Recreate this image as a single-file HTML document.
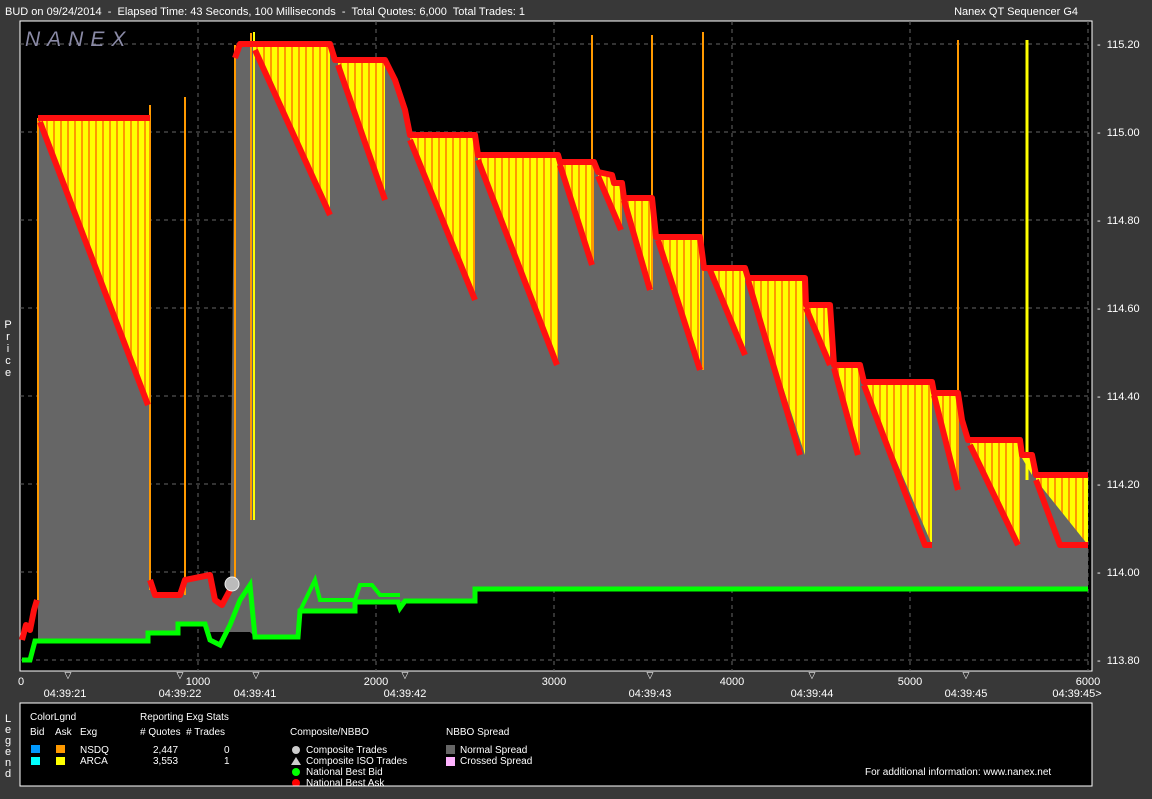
<!DOCTYPE html>
<html><head><meta charset="utf-8"><style>
html,body{margin:0;padding:0;background:#383838;width:1152px;height:799px;overflow:hidden}
svg{display:block}
text{font-family:"Liberation Sans",Arial,sans-serif;fill:#fff;font-size:11px;white-space:pre}
</style></head><body>
<svg width="1152" height="799" viewBox="0 0 1152 799" xmlns="http://www.w3.org/2000/svg" xml:space="preserve">
<defs>
<pattern id="st" width="7" height="10" patternUnits="userSpaceOnUse">
<rect width="7" height="10" fill="#ffff00"/><rect x="4" width="2" height="10" fill="#ff9900"/>
</pattern>
</defs>
<rect width="1152" height="799" fill="#383838"/>
<text x="5" y="15">BUD on 09/24/2014  -  Elapsed Time: 43 Seconds, 100 Milliseconds  -  Total Quotes: 6,000  Total Trades: 1</text>
<text x="1078" y="15" text-anchor="end">Nanex QT Sequencer G4</text>
<rect x="20" y="21" width="1072" height="650" fill="#000" stroke="#fff" stroke-width="1"/>
<g stroke="#666" stroke-dasharray="4,4" stroke-width="1">
<line x1="20" x2="1092" y1="44" y2="44"/><line x1="20" x2="1092" y1="132" y2="132"/>
<line x1="20" x2="1092" y1="220" y2="220"/><line x1="20" x2="1092" y1="308" y2="308"/>
<line x1="20" x2="1092" y1="396" y2="396"/><line x1="20" x2="1092" y1="484" y2="484"/>
<line x1="20" x2="1092" y1="572" y2="572"/><line x1="20" x2="1092" y1="660" y2="660"/>
<line y1="21" y2="671" x1="198" x2="198"/><line y1="21" y2="671" x1="376" x2="376"/>
<line y1="21" y2="671" x1="554" x2="554"/><line y1="21" y2="671" x1="732" x2="732"/>
<line y1="21" y2="671" x1="910" x2="910"/><line y1="21" y2="671" x1="1088" x2="1088"/>
</g>
<text x="25" y="46" style="font-size:21px;font-style:italic;letter-spacing:7px;fill:#8a8aa6">NANEX</text>
<polygon fill="#666" points="38,118 150,118 150,585 155,595 180,595 185,580 210,575 215,600 222,605 230,590 235,58 240,44 330,44 335,60 385,60 395,80 405,110 410,135 475,135 478,155 558,155 560,162 594,162 598,172 612,175 614,183 622,183 624,198 652,198 656,237 700,237 704,268 745,268 748,278 805,278 806,305 830,305 834,365 860,365 864,382 932,382 934,393 958,393 962,420 968,440 1020,440 1022,455 1032,455 1036,475 1088,475 1088,589 475,589 475,602 355,602 355,611 300,611 298,637 255,637 250,632 205,632 205,624 178,624 178,633 148,633 148,641 38,641"/>
<g fill="url(#st)">
<polygon points="40,118 150,118 150,405 40,122"/>
<polygon points="255,44 330,44 330,215 255,50"/>
<polygon points="338,60 385,60 385,200 338,65"/>
<polygon points="410,135 475,135 475,300 410,140"/>
<polygon points="478,155 558,155 558,365 478,160"/>
<polygon points="560,162 594,162 594,265 560,165"/>
<polygon points="598,172 622,183 622,230 598,176"/>
<polygon points="624,198 652,198 652,290 624,200"/>
<polygon points="658,237 700,237 700,370 658,240"/>
<polygon points="710,268 745,268 745,355 710,270"/>
<polygon points="748,278 805,278 805,455 748,280"/>
<polygon points="806,305 830,305 830,365 806,308"/>
<polygon points="834,365 860,365 860,455 834,368"/>
<polygon points="864,382 932,382 932,545 864,385"/>
<polygon points="934,393 958,393 958,490 934,395"/>
<polygon points="970,440 1020,440 1020,545 970,445"/>
<polygon points="1022,455 1032,455 1032,475 1022,458"/>
<polygon points="1036,475 1088,475 1088,545 1036,480"/>
</g>
<g stroke="#ff9900" stroke-width="2">
<line x1="38" y1="600" x2="38" y2="118"/>
<line x1="150" y1="590" x2="150" y2="105"/><line x1="185" y1="595" x2="185" y2="97"/>
<line x1="235" y1="580" x2="235" y2="45"/><line x1="251" y1="520" x2="251" y2="33"/>
<line x1="254" y1="520" x2="254" y2="32" stroke="#ffff00"/>
<line x1="592" y1="260" x2="592" y2="35"/><line x1="652" y1="290" x2="652" y2="35"/>
<line x1="703" y1="370" x2="703" y2="32"/><line x1="958" y1="490" x2="958" y2="40"/>
<line x1="1027" y1="480" x2="1027" y2="40" stroke="#ffff00" stroke-width="3"/>
</g>
<g fill="none" stroke="#ff1010" stroke-width="6" stroke-linejoin="round">
<polyline points="22,640 26,625 30,630 34,610 37,600"/>
<polyline points="38,118 150,118"/>
<polyline points="40,122 148,405"/>
<polyline points="150,580 155,595 180,595 185,580 210,575 215,600 222,605 230,590"/>
<polyline points="235,58 240,44 330,44 335,60 385,60 395,80 405,110 410,135 475,135 478,155 558,155 560,162 594,162 598,172 612,175 614,183 622,183 624,198 652,198 656,237 700,237 704,268 745,268 748,278 805,278 806,305 830,305 834,365 860,365 864,382 932,382 934,393 958,393 962,420 968,440 1020,440 1022,455 1032,455 1036,475 1088,475"/>
<polyline points="255,50 330,215"/><polyline points="338,65 385,200"/>
<polyline points="410,140 475,300"/><polyline points="478,160 557,365"/>
<polyline points="560,165 592,265"/><polyline points="598,176 621,230"/>
<polyline points="624,200 650,290"/><polyline points="658,240 700,370"/>
<polyline points="710,270 745,355"/><polyline points="748,280 800,455"/>
<polyline points="806,308 830,365"/><polyline points="834,368 858,455"/>
<polyline points="864,385 925,545 932,545"/><polyline points="934,395 958,490"/>
<polyline points="970,445 1018,545"/><polyline points="1036,480 1060,545 1088,545"/>
</g>
<polyline fill="none" stroke="#00ff00" stroke-width="5" points="22,660 30,660 35,641 148,641 148,633 178,633 178,624 205,624 210,640 220,645 230,625 240,600 250,585 255,637 298,637 300,611 355,611 355,602 398,602 400,608 405,601 475,601 475,589 1088,589"/>
<polyline fill="none" stroke="#00ff00" stroke-width="4" points="300,611 315,580 320,600 355,600 360,585 372,585 380,595 400,595"/>
<circle cx="232" cy="584" r="7" fill="#bbb" stroke="#eee"/>
<g>
<text x="1097" y="48">-  115.20</text><text x="1097" y="136">-  115.00</text>
<text x="1097" y="224">-  114.80</text><text x="1097" y="312">-  114.60</text>
<text x="1097" y="400">-  114.40</text><text x="1097" y="488">-  114.20</text>
<text x="1097" y="576">-  114.00</text><text x="1097" y="664">-  113.80</text>
</g>
<g text-anchor="middle">
<text x="21" y="685">0</text><text x="198" y="685">1000</text><text x="376" y="685">2000</text>
<text x="554" y="685">3000</text><text x="732" y="685">4000</text><text x="910" y="685">5000</text>
<text x="1088" y="685">6000</text>
<text x="65" y="697">04:39:21</text><text x="180" y="697">04:39:22</text><text x="255" y="697">04:39:41</text>
<text x="405" y="697">04:39:42</text><text x="650" y="697">04:39:43</text><text x="812" y="697">04:39:44</text>
<text x="966" y="697">04:39:45</text><text x="1077" y="697">04:39:45&gt;</text>
<text x="68" y="678" style="font-size:9px">▽</text><text x="180" y="678" style="font-size:9px">▽</text>
<text x="256" y="678" style="font-size:9px">▽</text><text x="405" y="678" style="font-size:9px">▽</text>
<text x="650" y="678" style="font-size:9px">▽</text><text x="812" y="678" style="font-size:9px">▽</text>
<text x="966" y="678" style="font-size:9px">▽</text>
</g>
<g text-anchor="middle" style="font-size:10px">
<text x="8" y="328">P</text><text x="8" y="340">r</text><text x="8" y="352">i</text><text x="8" y="364">c</text><text x="8" y="376">e</text>
<text x="8" y="722">L</text><text x="8" y="733">e</text><text x="8" y="744">g</text><text x="8" y="755">e</text><text x="8" y="766">n</text><text x="8" y="777">d</text>
</g>
<rect x="20" y="703" width="1072" height="83" fill="#000" stroke="#fff"/>
<text x="30" y="720" style="font-size:10px">ColorLgnd</text>
<text x="30" y="735" style="font-size:10px">Bid</text><text x="55" y="735" style="font-size:10px">Ask</text><text x="80" y="735" style="font-size:10px">Exg</text>
<rect x="31" y="745" width="9" height="8" fill="#0099ff"/><rect x="56" y="745" width="9" height="8" fill="#ff9900"/>
<rect x="31" y="757" width="9" height="8" fill="#00ffff"/><rect x="56" y="757" width="9" height="8" fill="#ffff00"/>
<text x="80" y="753" style="font-size:10px">NSDQ</text><text x="80" y="764" style="font-size:10px">ARCA</text>
<text x="140" y="720" style="font-size:10px">Reporting Exg Stats</text>
<text x="140" y="735" style="font-size:10px"># Quotes  # Trades</text>
<text x="153" y="753" style="font-size:10px">2,447</text><text x="153" y="764" style="font-size:10px">3,553</text>
<text x="224" y="753" style="font-size:10px">0</text><text x="224" y="764" style="font-size:10px">1</text>
<text x="290" y="735" style="font-size:10px">Composite/NBBO</text>
<circle cx="296" cy="750" r="4" fill="#ccc"/>
<polygon points="291,765 296,757 301,765" fill="#ccc"/>
<circle cx="296" cy="772" r="4" fill="#00ff00"/><circle cx="296" cy="783" r="4" fill="#ff0000"/>
<text x="306" y="753" style="font-size:10px">Composite Trades</text>
<text x="306" y="764" style="font-size:10px">Composite ISO Trades</text>
<text x="306" y="775" style="font-size:10px">National Best Bid</text>
<text x="306" y="786" style="font-size:10px">National Best Ask</text>
<rect x="20" y="786" width="1072" height="13" fill="#383838"/>
<line x1="20" y1="786" x2="1092" y2="786" stroke="#fff"/>
<text x="446" y="735" style="font-size:10px">NBBO Spread</text>
<rect x="446" y="745" width="9" height="9" fill="#666"/><rect x="446" y="757" width="9" height="9" fill="#ffb3ff"/>
<text x="460" y="753" style="font-size:10px">Normal Spread</text><text x="460" y="764" style="font-size:10px">Crossed Spread</text>
<text x="865" y="775" style="font-size:10px">For additional information: www.nanex.net</text>
</svg>
</body></html>
